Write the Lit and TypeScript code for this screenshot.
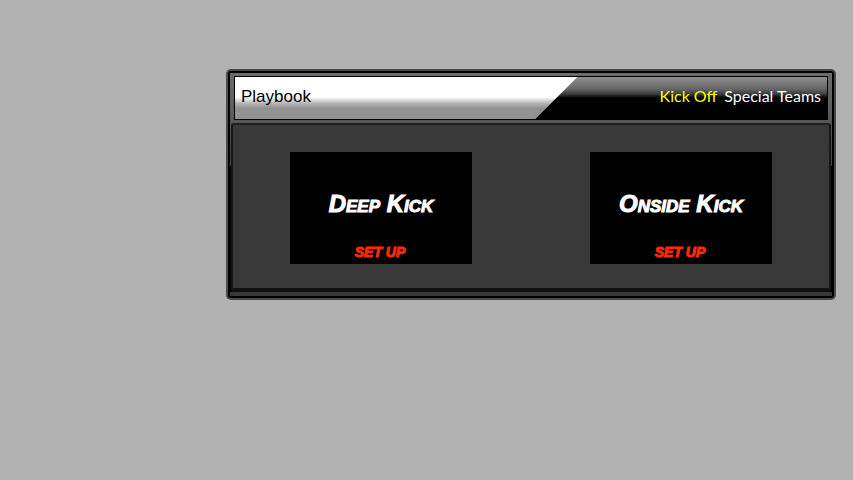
import { LitElement, html, css } from "lit";
import { customElement } from "lit/decorators.js";

@customElement("play-card")
class PlayCard extends LitElement {
  static properties = { name: { type: String } };
  declare name: string;

  static styles = css`
    :host {
      display: flex;
      flex-direction: column;
      align-items: center;
      justify-content: flex-end;
      box-sizing: border-box;
      width: 182px;
      min-height: 112px;
      padding-bottom: 4px;
      background: #000;
      font-family: "Liberation Sans", Arial, sans-serif;
      font-weight: bold;
      font-style: italic;
    }
    .name {
      margin: 0 0 26px;
      color: #fff;
      font-size: 24px;
      line-height: 28px;
      font-weight: bold;
      font-variant-caps: small-caps;
      white-space: nowrap;
      -webkit-text-stroke: 1px #fff;
    }
    .setup {
      padding: 0 2px 0 0;
      border: 0;
      background: none;
      color: #ff2a00;
      font: inherit;
      font-size: 14px;
      line-height: 16px;
      cursor: pointer;
      -webkit-text-stroke: 1px #ff2a00;
    }
  `;

  render() {
    return html`
      <h2 class="name">${this.name}</h2>
      <button class="setup" type="button">SET UP</button>
    `;
  }
}

@customElement("app-root")
class AppRoot extends LitElement {
  static styles = css`
    :host {
      display: block;
      box-sizing: border-box;
      min-height: 100vh;
      padding: 69px 17px 69px 226px;
      background: #b2b2b2;
    }
    .panel {
      padding: 2px;
      border-radius: 5px;
      background: #4b4b4b;
    }
    .rim {
      padding: 2px;
      border-radius: 3px;
      background: #000;
    }
    .frame {
      padding: 3px 1px 4px;
      background:
        linear-gradient(#383838, #383838) bottom / 100% 4px no-repeat,
        linear-gradient(#6c6c6c, #444 93px, #000 93px);
    }
    .header {
      display: flex;
      justify-content: space-between;
      margin: 0 3px 3px;
      border: 1px solid #000;
      background: linear-gradient(#8e8e8e, #666 12px, #3c3c3c 17px, #000 21px);
    }
    .title {
      box-sizing: border-box;
      width: calc(58% - 1px);
      margin: 0;
      padding: 0 6px 2px;
      background: linear-gradient(#fff 20px, #b8b8b8 26px, #929292 31px);
      clip-path: polygon(0 0, 100% 0, calc(100% - 42px) 100%, 0 100%);
      color: #000;
      font: 17px/40px "Liberation Sans", Arial, sans-serif;
    }
    .trail {
      display: flex;
      gap: 7px;
      padding-right: 6px;
      color: #fff;
      font: 16px/38px Lato, "Open Sans", sans-serif;
      white-space: nowrap;
    }
    .unit {
      color: #ff0;
    }
    .plays {
      display: flex;
      justify-content: space-between;
      padding: 27px 57px 24px;
      border: 2px solid #1b1b1b;
      border-color: #202020 #151515 #101010;
      border-bottom-width: 4px;
      border-radius: 3px;
      background: #383838;
    }
  `;

  render() {
    return html`
      <section class="panel">
        <div class="rim">
          <div class="frame">
            <header class="header">
              <h1 class="title">Playbook</h1>
              <div class="trail">
                <span class="unit">Kick Off</span>
                <span>Special Teams</span>
              </div>
            </header>
            <div class="plays">
              <play-card name="Deep Kick"></play-card>
              <play-card name="Onside Kick"></play-card>
            </div>
          </div>
        </div>
      </section>
    `;
  }
}
